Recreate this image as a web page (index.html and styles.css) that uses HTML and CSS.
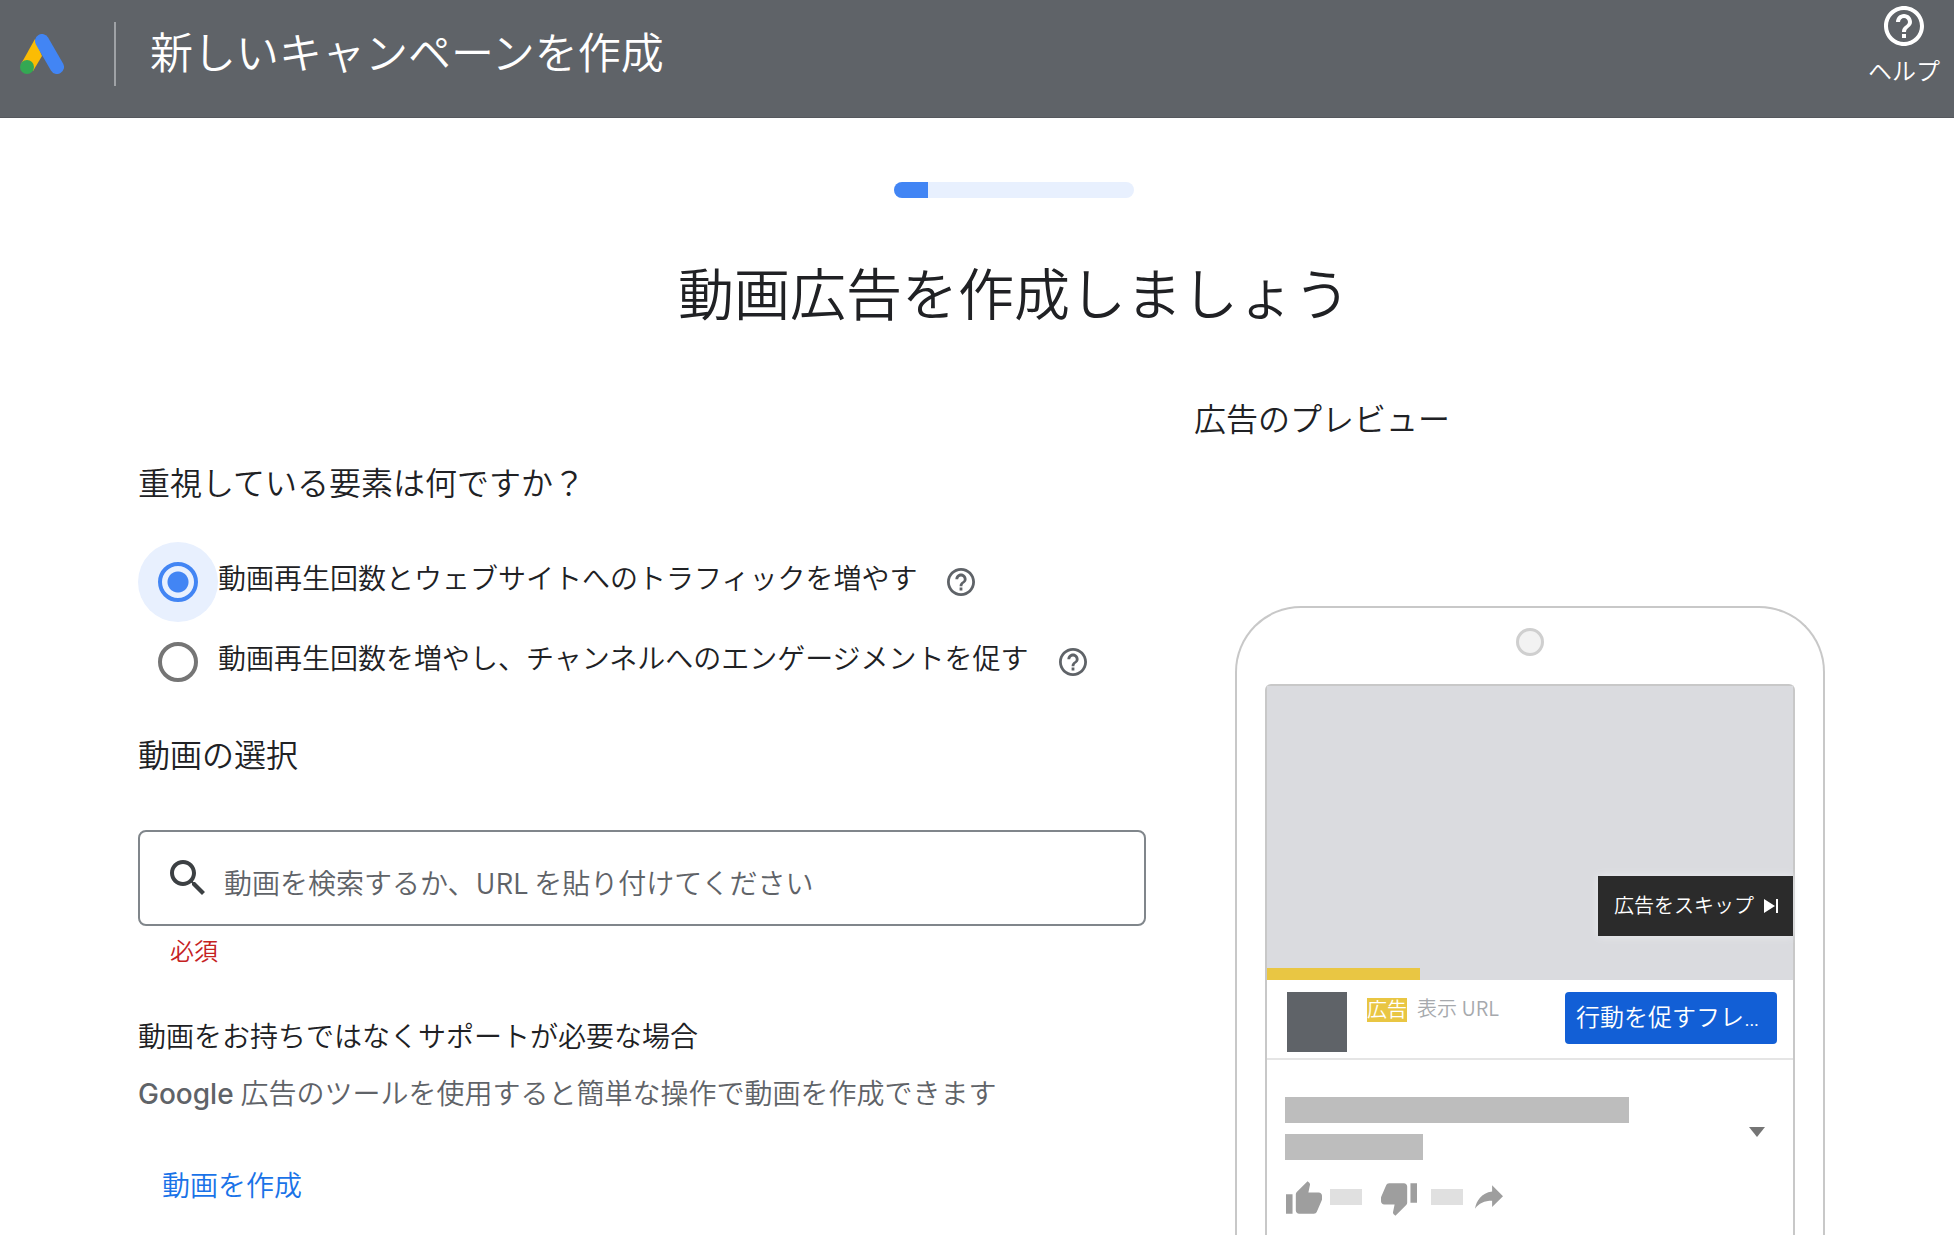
FILE: index.html
```html
<!DOCTYPE html>
<html lang="ja">
<head>
<meta charset="utf-8">
<meta name="viewport" content="width=device-width, initial-scale=1">
<title>新しいキャンペーンを作成</title>
<link rel="stylesheet" href="styles.css">
</head>
<body>
<svg class="sprite" aria-hidden="true">
  <symbol id="help-icon" viewBox="2 2 20 20"><path d="M11 18h2v-2h-2v2zm1-16C6.48 2 2 6.48 2 12s4.48 10 10 10 10-4.48 10-10S17.52 2 12 2zm0 18c-4.41 0-8-3.59-8-8s3.59-8 8-8 8 3.59 8 8-3.59 8-8 8zm0-14c-2.21 0-4 1.79-4 4h2c0-1.1.9-2 2-2s2 .9 2 2c0 2-3 1.75-3 5h2c0-2.25 3-2.5 3-5 0-2.21-1.79-4-4-4z"/></symbol>
  <symbol id="thumb-icon" viewBox="1 1 22 20"><path d="M1 21h4V9H1v12zm22-11c0-1.1-.9-2-2-2h-6.31l.95-4.57.03-.32c0-.41-.17-.79-.44-1.06L14.17 1 7.59 7.59C7.22 7.95 7 8.45 7 9v10c0 1.1.9 2 2 2h9c.83 0 1.54-.5 1.84-1.22l3.02-7.05c.09-.23.14-.47.14-.73v-2z"/></symbol>
</svg>

<header class="topbar">
  <div class="brand">
    <svg class="logo" viewBox="0 0 44 40" aria-hidden="true">
      <path d="M15 5 22 22 13 37 1 30z" fill="#fbbc04"/>
      <path d="M22 7 37 33" stroke="#4285f4" stroke-width="14" stroke-linecap="round"/>
      <circle cx="7" cy="33" r="7" fill="#34a853"/>
    </svg>
    <span class="topbar-title">新しいキャンペーンを作成</span>
  </div>
  <button class="help-button" type="button">
    <svg aria-hidden="true"><use href="#help-icon"/></svg>
    <span>ヘルプ</span>
  </button>
</header>

<main class="page">
  <div class="progress" role="progressbar" aria-label="進行状況" aria-valuenow="14" aria-valuemin="0" aria-valuemax="100"><div class="progress-fill" style="width: 14%"></div></div>
  <h1>動画広告を作成しましょう</h1>

  <div class="columns">
    <form class="setup">
      <fieldset class="goal">
        <legend class="section-title">重視している要素は何ですか？</legend>
        <div class="option">
          <input type="radio" name="goal" id="goal-traffic" checked>
          <label for="goal-traffic">動画再生回数とウェブサイトへのトラフィックを増やす</label>
          <button class="info" type="button" aria-label="ヘルプ"><svg aria-hidden="true"><use href="#help-icon"/></svg></button>
        </div>
        <div class="option">
          <input type="radio" name="goal" id="goal-engagement">
          <label for="goal-engagement">動画再生回数を増やし、チャンネルへのエンゲージメントを促す</label>
          <button class="info" type="button" aria-label="ヘルプ"><svg aria-hidden="true"><use href="#help-icon"/></svg></button>
        </div>
      </fieldset>

      <label class="section-title video-label" for="video">動画の選択</label>
      <div class="search">
        <svg viewBox="3 3 18 18" aria-hidden="true"><path d="M15.5 14h-.79l-.28-.27C15.41 12.59 16 11.11 16 9.5 16 5.91 13.09 3 9.5 3S3 5.91 3 9.5 5.91 16 9.5 16c1.61 0 3.09-.59 4.23-1.57l.27.28v.79l5 4.99L20.49 19l-4.99-5zm-6 0C7.01 14 5 11.99 5 9.5S7.01 5 9.5 5 14 7.01 14 9.5 11.99 14 9.5 14z"/></svg>
        <input type="text" id="video" placeholder="動画を検索するか、URL を貼り付けてください" aria-describedby="video-error">
      </div>
      <p class="error" id="video-error">必須</p>

      <h2 class="support-title">動画をお持ちではなくサポートが必要な場合</h2>
      <p class="support-text"><span class="product">Google</span> 広告のツールを使用すると簡単な操作で動画を作成できます</p>
      <a class="create-link" href="#">動画を作成</a>
    </form>

    <section class="preview">
      <h2 class="section-title">広告のプレビュー</h2>
      <div class="phone">
        <div class="camera"></div>
        <div class="screen">
          <div class="video">
            <button class="skip" type="button">広告をスキップ
              <svg viewBox="0 0 14 14" aria-hidden="true"><path d="M0 0 11 7 0 14zM12 0h2v14h-2z"/></svg>
            </button>
            <div class="played"></div>
          </div>
          <div class="ad-row">
            <div class="thumbnail"></div>
            <span class="ad-badge">広告</span>
            <span class="display-url">表示 URL</span>
            <button class="cta" type="button">行動を促すフレ…</button>
          </div>
          <div class="details">
            <div class="headline">
              <div class="lines">
                <div class="line line-long"></div>
                <div class="line line-short"></div>
              </div>
              <svg class="caret" viewBox="0 0 16 10" aria-hidden="true"><path d="M0 0h16L8 10z"/></svg>
            </div>
            <div class="actions">
              <svg class="thumb" aria-hidden="true"><use href="#thumb-icon"/></svg>
              <div class="count"></div>
              <svg class="thumb thumb-down" aria-hidden="true"><use href="#thumb-icon"/></svg>
              <div class="count"></div>
              <svg class="share" viewBox="3 5 18 15" aria-hidden="true"><path d="M14 9V5l7 7-7 7v-4.1c-5 0-8.5 1.6-11 5.1 1-5 4-10 11-11z"/></svg>
            </div>
          </div>
        </div>
      </div>
    </section>
  </div>
</main>
</body>
</html>
```
FILE: styles.css
```css
* {
  box-sizing: border-box;
}

body {
  margin: 0;
  background: #fff;
  color: #202124;
  font-family: Roboto, "Noto Sans CJK JP", sans-serif;
  font-size: 28px;
  font-weight: 350;
  line-height: 40px;
}

button,
input {
  font: inherit;
}

button {
  border: 0;
  padding: 0;
  background: none;
  color: inherit;
  cursor: pointer;
}

h1,
h2,
p {
  margin: 0;
  font-weight: inherit;
}

svg {
  display: block;
  flex: none;
  fill: currentColor;
}

.sprite {
  position: absolute;
  width: 0;
  height: 0;
}

/* Top bar */
.topbar {
  display: flex;
  justify-content: space-between;
  align-items: flex-start;
  min-height: 118px;
  padding: 6px 14px 0 20px;
  background: #5f6368;
  border-bottom: 1px solid #55585d;
  color: #fff;
}

.brand {
  display: flex;
  align-items: center;
  gap: 50px;
  margin-top: 16px;
}

.logo {
  width: 44px;
  height: 40px;
}

.topbar-title {
  padding-left: 34px;
  border-left: 2px solid #9fa2a6;
  font-size: 43px;
  line-height: 64px;
}

.help-button {
  display: flex;
  flex-direction: column;
  align-items: center;
  gap: 10px;
  font-size: 24px;
  line-height: 32px;
}

.help-button svg {
  width: 40px;
  height: 40px;
}

/* Page */
.page {
  padding: 64px 64px 6px 138px;
}

.progress {
  width: 240px;
  height: 16px;
  margin: 0 auto;
  border-radius: 8px;
  background: #e8f0fe;
  overflow: hidden;
}

.progress-fill {
  height: 100%;
  background: #4285f4;
}

h1 {
  margin: 66px 0 72px;
  font-size: 56px;
  line-height: 64px;
  text-align: center;
}

.columns {
  display: grid;
  grid-template-columns: 1008fr 696fr;
  gap: 48px;
}

.section-title {
  display: block;
  padding: 0;
  font-size: 32px;
  line-height: 40px;
}

/* Form */
.setup {
  padding: 64px 0 28px;
}

.goal {
  margin: 0;
  padding: 0;
  border: 0;
}

.goal .section-title {
  margin-bottom: 38px;
}

.option {
  display: flex;
  align-items: center;
  height: 80px;
}

.option input {
  appearance: none;
  flex: none;
  width: 40px;
  height: 40px;
  margin: 20px;
  border: 4px solid #757575;
  border-radius: 50%;
}

.option input:checked {
  border-color: #4285f4;
  background: radial-gradient(circle, #4285f4 10px, #e8f0fe 11px);
  box-shadow: 0 0 0 20px #e8f0fe;
}

.option label {
  padding-bottom: 4px;
}

.info {
  margin-left: 30px;
  color: #5f6368;
}

.info svg {
  width: 28px;
  height: 28px;
}

.video-label {
  margin: 34px 0 54px;
}

.search {
  display: flex;
  align-items: center;
  gap: 18px;
  height: 96px;
  padding: 0 30px;
  border: 2px solid #80868b;
  border-radius: 8px;
}

.search svg {
  width: 36px;
  height: 36px;
  color: #3c4043;
}

.search input {
  flex: 1;
  min-width: 0;
  height: 100%;
  padding: 8px 0 0;
  border: 0;
  outline: 0;
  background: none;
  color: #202124;
  font-family: "Noto Sans CJK JP", sans-serif;
}

.search input::placeholder {
  color: #5f6368;
  opacity: 1;
}

.error {
  margin: 10px 32px 50px;
  color: #c5221f;
  font-size: 24px;
  line-height: 32px;
}

.support-title {
  font-size: 28px;
}

.support-text {
  margin: 16px 0 52px;
  color: #5f6368;
}

.product {
  font-family: Inter, sans-serif;
  font-weight: 500;
}

.create-link {
  margin-left: 24px;
  color: #1a73e8;
  text-decoration: none;
}

/* Ad preview */
.preview {
  display: flex;
  flex-direction: column;
}

.phone {
  display: flex;
  flex: 1;
  flex-direction: column;
  align-items: center;
  width: 590px;
  margin: 166px 0 0 41px;
  padding: 20px 28px 0;
  border: 2px solid #c8c8c8;
  border-bottom: 0;
  border-radius: 66px 66px 0 0;
}

.camera {
  width: 28px;
  height: 28px;
  border: 3px solid #cfcfcf;
  border-radius: 50%;
  background: #f2f2f2;
}

.screen {
  flex: 1;
  width: 100%;
  margin-top: 28px;
  border: 2px solid #c8c8c8;
  border-bottom: 0;
  border-radius: 6px 6px 0 0;
}

.video {
  display: flex;
  flex-direction: column;
  justify-content: flex-end;
  gap: 32px;
  height: 294px;
  background: #dadbdf;
}

.skip {
  display: flex;
  align-items: center;
  align-self: flex-end;
  gap: 10px;
  height: 60px;
  padding: 0 15px 0 16px;
  background: #2b2b2b;
  box-shadow: 0 0 8px #eceef1;
  color: #fff;
  font-size: 20px;
}

.skip svg {
  width: 14px;
  height: 14px;
}

.played {
  width: 29%;
  height: 12px;
  background: #e9c643;
}

.ad-row {
  display: flex;
  align-items: flex-start;
  height: 80px;
  padding: 12px 16px 0 20px;
  border-bottom: 2px solid #e5e5e5;
  font-size: 20px;
  line-height: 24px;
}

.thumbnail {
  width: 60px;
  height: 60px;
  margin-right: 20px;
  background: #5f6368;
}

.ad-badge {
  margin: 6px 10px 0 0;
  background: #e9c643;
  color: #fff;
}

.display-url {
  margin-top: 4px;
  color: #a6a9ad;
  font-family: "Noto Sans CJK JP", sans-serif;
}

.cta {
  width: 212px;
  height: 52px;
  margin-left: auto;
  padding-left: 11px;
  border-radius: 4px;
  background: #125fd6;
  color: #fff;
  font-size: 24px;
  text-align: left;
}

.details {
  padding: 37px 28px 0 18px;
}

.headline {
  display: flex;
  justify-content: space-between;
  align-items: center;
}

.lines {
  display: grid;
  gap: 11px;
}

.line {
  height: 26px;
  background: #bdbdbd;
}

.line-long {
  width: 344px;
}

.line-short {
  width: 138px;
}

.caret {
  width: 16px;
  height: 10px;
  margin-top: 6px;
  color: #757575;
}

.actions {
  display: flex;
  align-items: center;
  margin: 18px 0 0 1px;
  color: #9e9e9e;
}

.thumb {
  width: 36px;
  height: 33px;
}

.thumb-down {
  margin: 5px 0 0 19px;
  transform: rotate(180deg);
}

.count {
  width: 32px;
  height: 16px;
  margin-left: 8px;
  background: #e0e0e0;
}

.thumb-down + .count {
  margin-left: 14px;
}

.share {
  width: 28px;
  height: 24px;
  margin-left: 12px;
}
```
